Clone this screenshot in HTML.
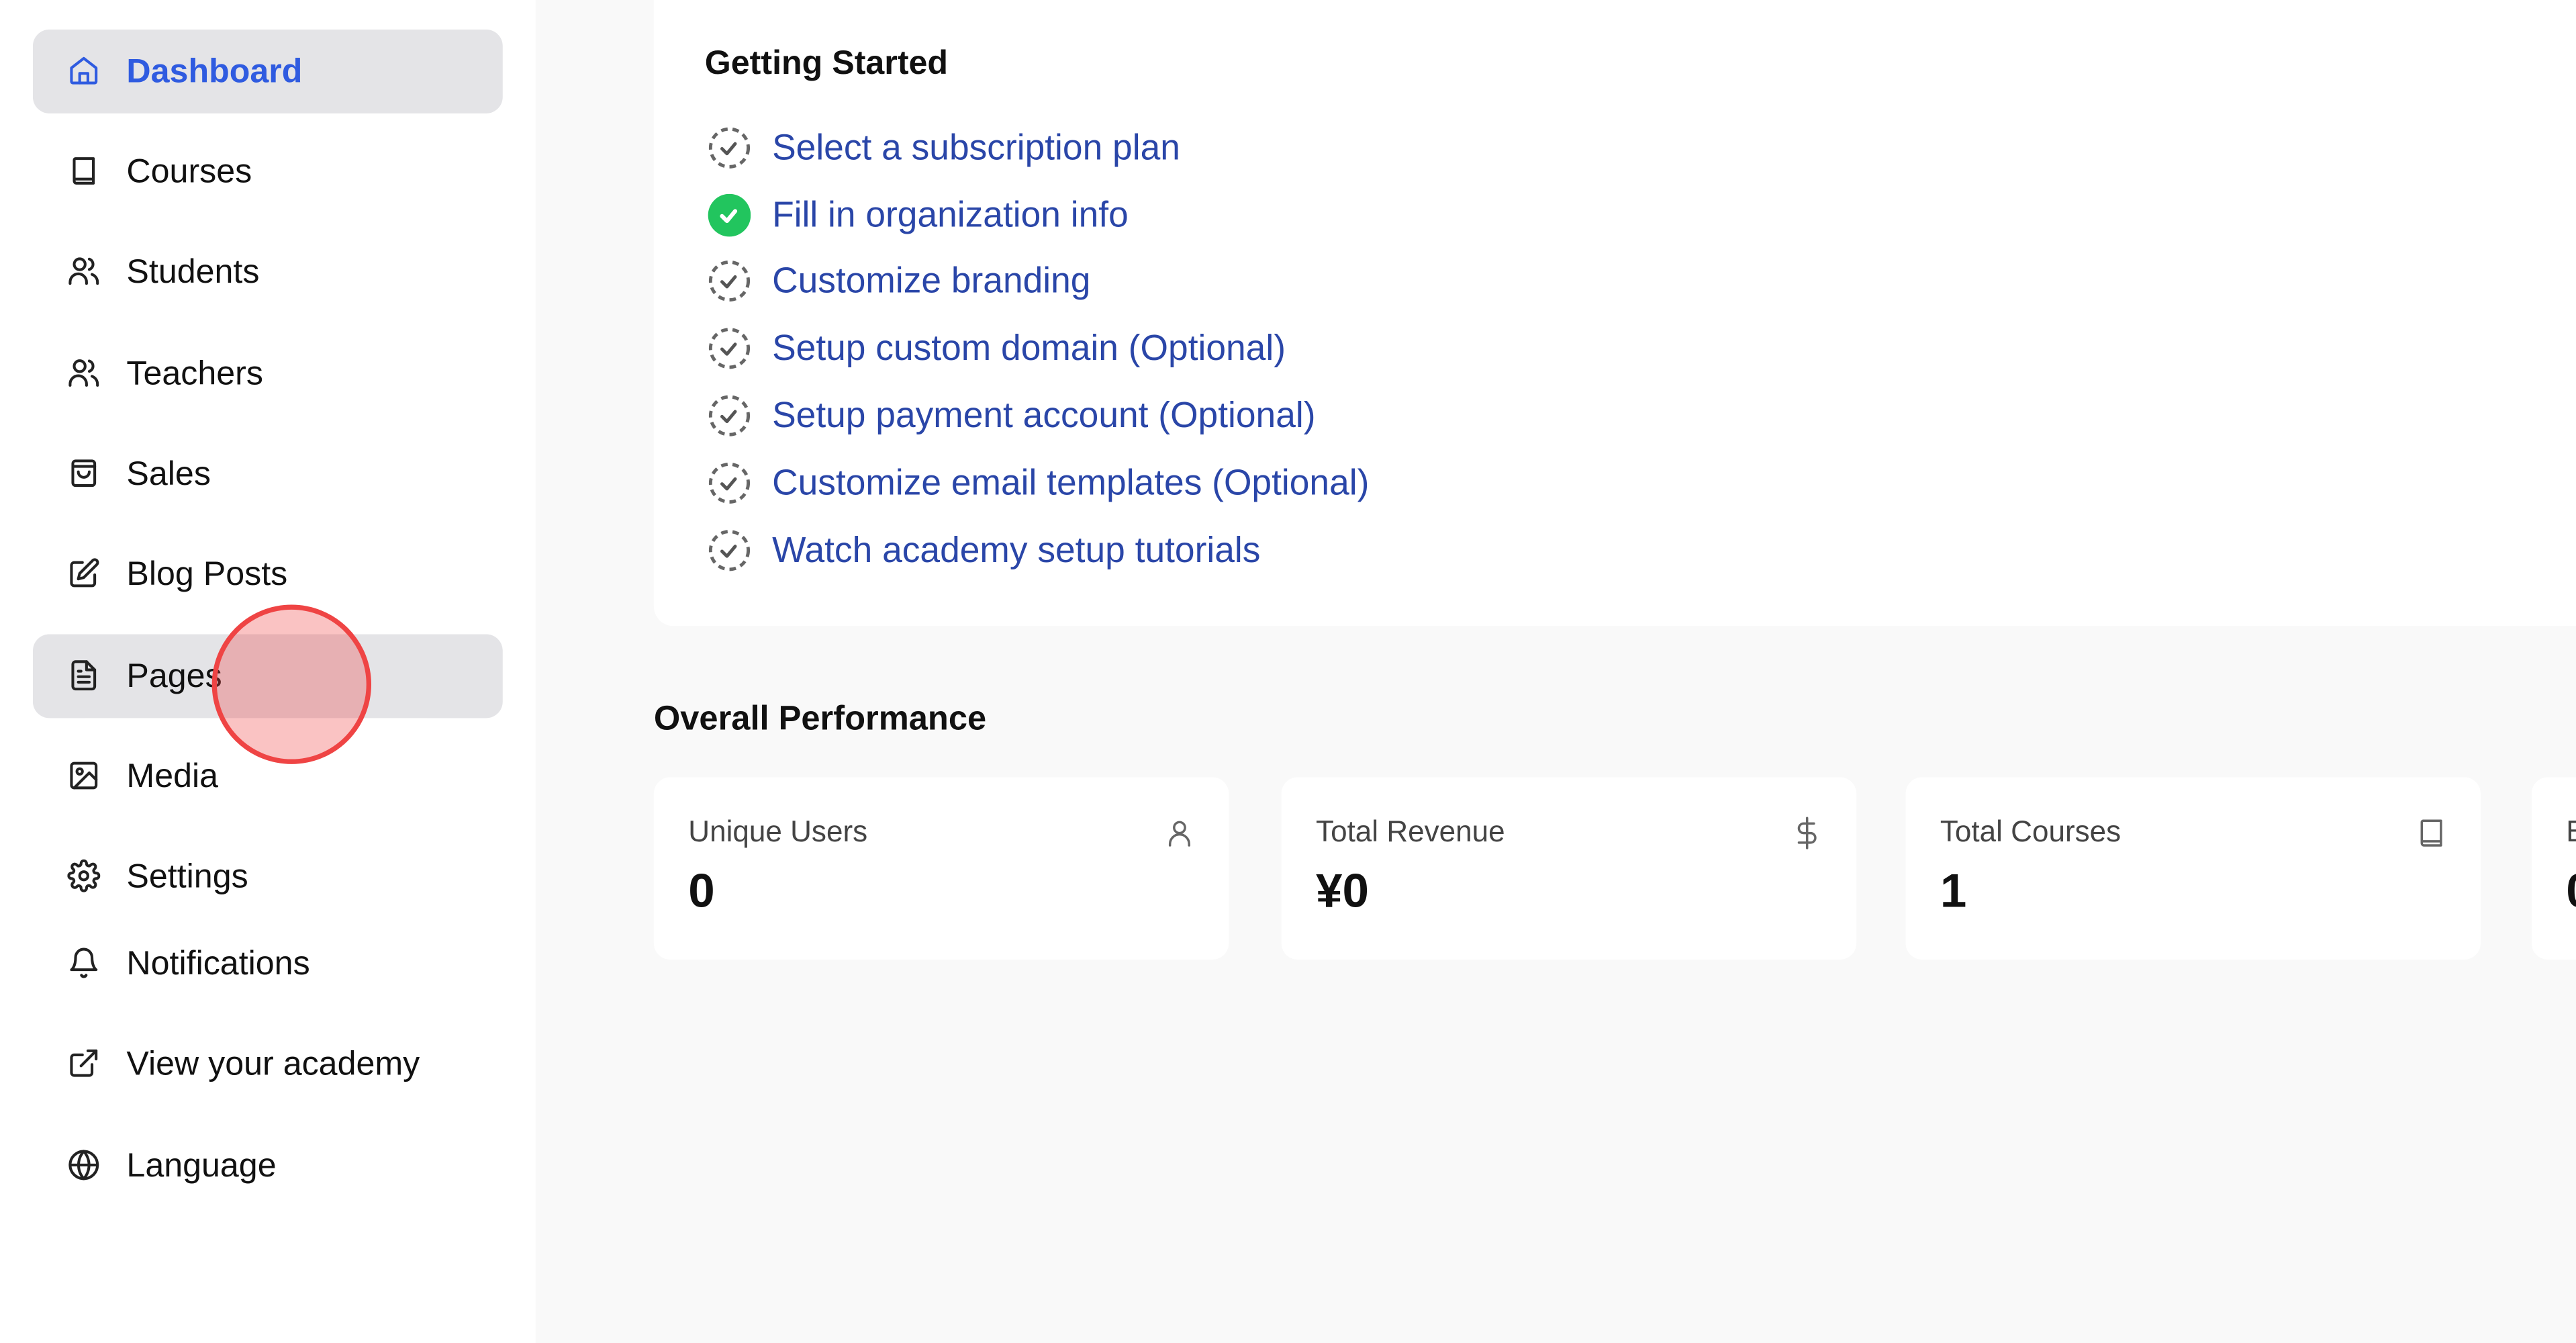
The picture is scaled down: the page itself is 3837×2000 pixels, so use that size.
<!DOCTYPE html>
<html><head><meta charset="utf-8"><style>
html,body{margin:0;padding:0;width:3837px;height:2000px;overflow:hidden;background:#f9f9f9;}
#w{width:1568px;height:818px;transform:scale(2.447);transform-origin:0 0;position:relative;font-family:"Liberation Sans",sans-serif;}
.side{position:absolute;left:0;top:0;width:326px;height:818px;background:#fff;}
.it{position:absolute;left:20px;width:286px;height:51px;border-radius:10px;font-size:20.5px;color:#111;}
.it.sel{background:#e4e4e7;}
.it svg{position:absolute;left:21px;top:15px;width:20px;height:20px;fill:none;stroke:#222;stroke-width:2;stroke-linecap:round;stroke-linejoin:round;}
.it span{position:absolute;left:57px;top:14px;}
.card{position:absolute;background:#fff;border-radius:12px;}
.gs{left:398px;top:-20px;width:1200px;height:401px;}
.li{position:absolute;left:429px;font-size:21.8px;color:#2a46a8;}
.li svg{position:absolute;left:0;top:-1px;width:28px;height:28px;}
.li span{position:absolute;left:41px;top:-1px;white-space:nowrap;}
.st{top:473px;width:350px;height:111px;border-radius:10px;}
.st .l{position:absolute;left:21px;top:23px;font-size:18px;color:#444;}
.st .v{position:absolute;left:21px;top:54px;font-size:29px;font-weight:bold;color:#111;}
.st svg{position:absolute;right:20px;top:24px;width:20px;height:20px;fill:none;stroke:#666;stroke-width:1.7;stroke-linecap:round;stroke-linejoin:round;}
</style></head><body><div id="w">
<div class="side">
<div class="it sel" style="top:18px;color:#2f5be0;font-weight:bold"><svg viewBox="0 0 24 24" style="stroke:#2f5be0"><path d="M3 10l9-7 9 7v10a1 1 0 0 1-1 1H4a1 1 0 0 1-1-1z"/><path d="M9 21v-7h6v7"/></svg><span>Dashboard</span></div>
<div class="it" style="top:79px"><svg viewBox="0 0 24 24"><path d="M5 19.5V4a1 1 0 0 1 1-1h13v18H6.5A1.5 1.5 0 0 1 5 19.5zM5 18h14"/></svg><span>Courses</span></div>
<div class="it" style="top:140px"><svg viewBox="0 0 24 24"><circle cx="9" cy="7" r="4"/><path d="M2 21v-1a6 6 0 0 1 12 0v1M16 3.2a4 4 0 0 1 0 7.6M22 21v-1a6 6 0 0 0-4-5.6"/></svg><span>Students</span></div>
<div class="it" style="top:202px"><svg viewBox="0 0 24 24"><circle cx="9" cy="7" r="4"/><path d="M2 21v-1a6 6 0 0 1 12 0v1M16 3.2a4 4 0 0 1 0 7.6M22 21v-1a6 6 0 0 0-4-5.6"/></svg><span>Teachers</span></div>
<div class="it" style="top:263px"><svg viewBox="0 0 24 24"><rect x="4" y="3" width="16" height="18" rx="2"/><path d="M4 7h16M8 11a4 4 0 0 0 8 0"/></svg><span>Sales</span></div>
<div class="it" style="top:324px"><svg viewBox="0 0 24 24"><path d="M11 4H5a2 2 0 0 0-2 2v13a2 2 0 0 0 2 2h13a2 2 0 0 0 2-2v-6"/><path d="M18.5 2.5a2.1 2.1 0 0 1 3 3L12 15l-4 1 1-4z"/></svg><span>Blog Posts</span></div>
<div class="it sel" style="top:386px"><svg viewBox="0 0 24 24"><path d="M14 2H6a2 2 0 0 0-2 2v16a2 2 0 0 0 2 2h12a2 2 0 0 0 2-2V8z"/><path d="M14 2v6h6M8 13h8M8 17h8M8 9h2"/></svg><span>Pages</span></div>
<div class="it" style="top:447px"><svg viewBox="0 0 24 24"><rect x="3" y="3" width="18" height="18" rx="2"/><circle cx="9" cy="9" r="2"/><path d="M21 15l-5-5L5 21"/></svg><span>Media</span></div>
<div class="it" style="top:508px"><svg viewBox="0 0 24 24"><circle cx="12" cy="12" r="3"/><path d="M19.4 15a1.7 1.7 0 0 0 .3 1.8l.1.1a2 2 0 1 1-2.8 2.8l-.1-.1a1.7 1.7 0 0 0-2.9 1.2V21a2 2 0 1 1-4 0v-.1a1.7 1.7 0 0 0-2.9-1.2l-.1.1a2 2 0 1 1-2.8-2.8l.1-.1A1.7 1.7 0 0 0 3 14H3a2 2 0 1 1 0-4h.1a1.7 1.7 0 0 0 1.2-2.9l-.1-.1a2 2 0 1 1 2.8-2.8l.1.1A1.7 1.7 0 0 0 10 3V3a2 2 0 1 1 4 0v.1a1.7 1.7 0 0 0 2.9 1.2l.1-.1a2 2 0 1 1 2.8 2.8l-.1.1A1.7 1.7 0 0 0 21 10h.1a2 2 0 1 1 0 4H21a1.7 1.7 0 0 0-1.6 1z"/></svg><span>Settings</span></div>
<div class="it" style="top:561px"><svg viewBox="0 0 24 24"><path d="M6 8a6 6 0 0 1 12 0c0 7 3 9 3 9H3s3-2 3-9M10.3 21a1.9 1.9 0 0 0 3.4 0"/></svg><span>Notifications</span></div>
<div class="it" style="top:622px"><svg viewBox="0 0 24 24"><path d="M18 13v6a2 2 0 0 1-2 2H5a2 2 0 0 1-2-2V8a2 2 0 0 1 2-2h6M15 3h6v6M10 14L21 3"/></svg><span>View your academy</span></div>
<div class="it" style="top:684px"><svg viewBox="0 0 24 24"><circle cx="12" cy="12" r="10"/><path d="M2 12h20M12 2a15 15 0 0 1 0 20M12 2a15 15 0 0 0 0 20"/></svg><span>Language</span></div>
</div>

<div class="card gs"></div>
<div style="position:absolute;left:429px;top:27px;font-size:20.5px;font-weight:bold;color:#111">Getting Started</div>
<div class="li" style="top:78px"><svg viewBox="0 0 28 28"><circle cx="15" cy="13" r="11.5" fill="none" stroke="#666" stroke-width="2" stroke-dasharray="4 3"/><path d="M10.5 13.5l3 3 5-6" fill="none" stroke="#555" stroke-width="2" stroke-linecap="round" stroke-linejoin="round"/></svg><span>Select a subscription plan</span></div>
<div class="li" style="top:119px"><svg viewBox="0 0 28 28"><circle cx="15" cy="13" r="13" fill="#22c55e"/><path d="M10.5 13.5l3 3 5-6" fill="none" stroke="#fff" stroke-width="2.5" stroke-linecap="round" stroke-linejoin="round"/></svg><span>Fill in organization info</span></div>
<div class="li" style="top:159px"><svg viewBox="0 0 28 28"><circle cx="15" cy="13" r="11.5" fill="none" stroke="#666" stroke-width="2" stroke-dasharray="4 3"/><path d="M10.5 13.5l3 3 5-6" fill="none" stroke="#555" stroke-width="2" stroke-linecap="round" stroke-linejoin="round"/></svg><span>Customize branding</span></div>
<div class="li" style="top:200px"><svg viewBox="0 0 28 28"><circle cx="15" cy="13" r="11.5" fill="none" stroke="#666" stroke-width="2" stroke-dasharray="4 3"/><path d="M10.5 13.5l3 3 5-6" fill="none" stroke="#555" stroke-width="2" stroke-linecap="round" stroke-linejoin="round"/></svg><span>Setup custom domain (Optional)</span></div>
<div class="li" style="top:241px"><svg viewBox="0 0 28 28"><circle cx="15" cy="13" r="11.5" fill="none" stroke="#666" stroke-width="2" stroke-dasharray="4 3"/><path d="M10.5 13.5l3 3 5-6" fill="none" stroke="#555" stroke-width="2" stroke-linecap="round" stroke-linejoin="round"/></svg><span>Setup payment account (Optional)</span></div>
<div class="li" style="top:282px"><svg viewBox="0 0 28 28"><circle cx="15" cy="13" r="11.5" fill="none" stroke="#666" stroke-width="2" stroke-dasharray="4 3"/><path d="M10.5 13.5l3 3 5-6" fill="none" stroke="#555" stroke-width="2" stroke-linecap="round" stroke-linejoin="round"/></svg><span>Customize email templates (Optional)</span></div>
<div class="li" style="top:323px"><svg viewBox="0 0 28 28"><circle cx="15" cy="13" r="11.5" fill="none" stroke="#666" stroke-width="2" stroke-dasharray="4 3"/><path d="M10.5 13.5l3 3 5-6" fill="none" stroke="#555" stroke-width="2" stroke-linecap="round" stroke-linejoin="round"/></svg><span>Watch academy setup tutorials</span></div>

<div style="position:absolute;left:398px;top:426px;font-size:20.7px;font-weight:bold;color:#111">Overall Performance</div>
<div class="card st" style="left:398px"><div class="l">Unique Users</div><div class="v">0</div><svg viewBox="0 0 24 24"><circle cx="12" cy="8" r="4"/><path d="M5 21v-1a7 7 0 0 1 14 0v1"/></svg></div>
<div class="card st" style="left:780px"><div class="l">Total Revenue</div><div class="v">¥0</div><svg viewBox="0 0 24 24"><path d="M12 1v22M17 5H9.5a3.5 3.5 0 0 0 0 7h5a3.5 3.5 0 0 1 0 7H6"/></svg></div>
<div class="card st" style="left:1160px"><div class="l">Total Courses</div><div class="v">1</div><svg viewBox="0 0 24 24"><path d="M5 19.5V4a1 1 0 0 1 1-1h13v18H6.5A1.5 1.5 0 0 1 5 19.5zM5 18h14"/></svg></div>
<div class="card st" style="left:1541px"><div class="l">B</div><div class="v">0</div></div>

<div style="position:absolute;left:129px;top:368px;width:91px;height:91px;border-radius:50%;background:rgba(239,68,68,0.32);border:3px solid #ef4444;"></div>
</div></body></html>
